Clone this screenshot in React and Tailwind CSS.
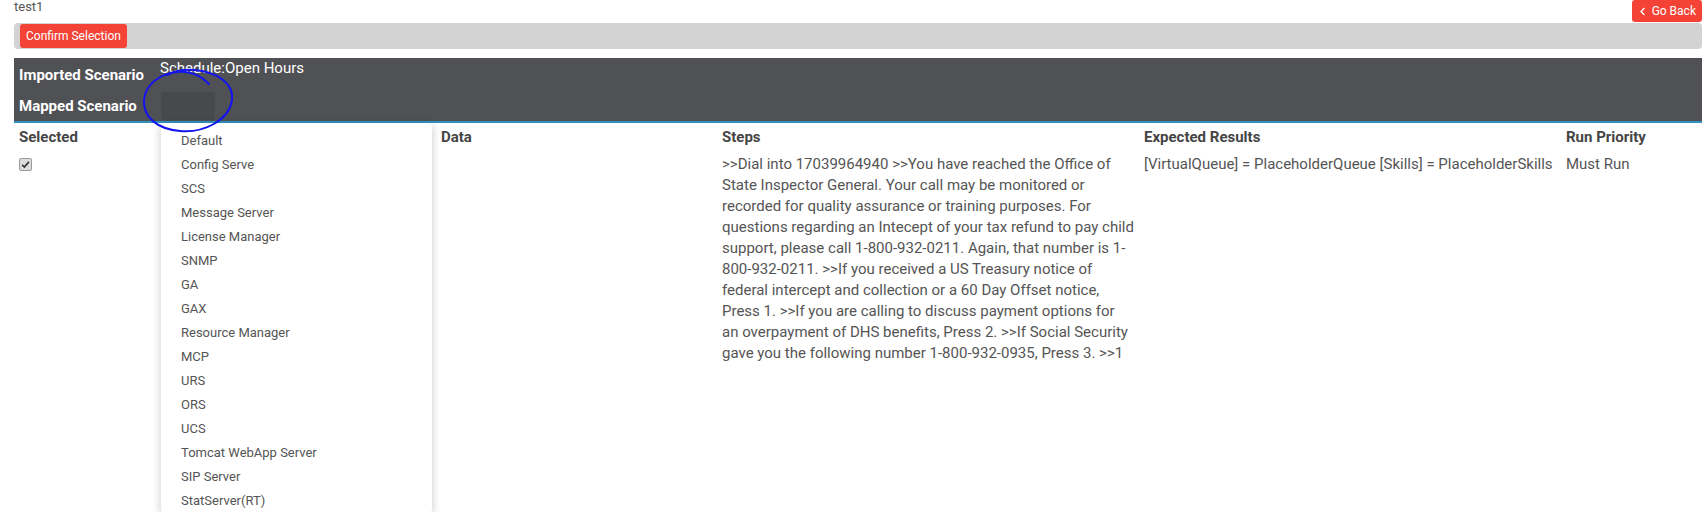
import React from "react";
import { FaChevronLeft } from "react-icons/fa";

const options = [
  "Default",
  "Config Serve",
  "SCS",
  "Message Server",
  "License Manager",
  "SNMP",
  "GA",
  "GAX",
  "Resource Manager",
  "MCP",
  "URS",
  "ORS",
  "UCS",
  "Tomcat WebApp Server",
  "SIP Server",
  "StatServer(RT)",
];

const steps =
  ">>Dial into 17039964940 >>You have reached the Office of State Inspector General. Your call may be monitored or recorded for quality assurance or training purposes. For questions regarding an Intecept of your tax refund to pay child support, please call 1-800-932-0211. Again, that number is 1-800-932-0211. >>If you received a US Treasury notice of federal intercept and collection or a 60 Day Offset notice, Press 1. >>If you are calling to discuss payment options for an overpayment of DHS benefits, Press 2. >>If Social Security gave you the following number 1-800-932-0935, Press 3. >>1";

const App = () => {
  return (
    <div className="relative h-[512px] w-full overflow-hidden bg-white font-['Roboto',sans-serif] text-[#555]">
      <div className="pl-[14px] pr-[5px]">
        {/* Top bar */}
        <div className="flex h-[22px] items-start justify-between">
          <span className="text-[13px] leading-[14px] text-[#555]">test1</span>
          <button className="flex h-[22px] items-center gap-[5px] rounded-[3px] bg-[#f44336] px-[6px] text-[12px] text-white">
            <FaChevronLeft className="text-[9px]" /> Go Back
          </button>
        </div>

        {/* Action bar */}
        <div className="mt-px flex h-[26px] items-center rounded-[4px] bg-[#d3d3d3] px-[6px]">
          <button className="h-[24px] rounded-[3px] bg-[#f44336] px-[6px] text-[12px] text-white">
            Confirm Selection
          </button>
        </div>

        {/* Scenario header */}
        <div className="mt-[9px] border-b-2 border-[#2f93c0] bg-[#505155] text-[15px] text-white">
          <div className="flex h-[34px]">
            <div className="flex w-[141px] items-center pl-[5px] pt-[1px] font-bold">Imported Scenario</div>
            <div className="pl-[5px] leading-[21px]">Schedule:Open Hours</div>
          </div>
          <div className="flex h-[29px]">
            <div className="flex w-[141px] items-center pl-[5px] font-bold">Mapped Scenario</div>
            <div className="pl-[6px]">
              <div className="h-[28px] w-[54px] rounded-[2px] bg-[#48494d]"></div>
            </div>
          </div>
        </div>

        {/* Test case table */}
        <div className="grid grid-cols-[141px_281px_281px_422px_422px_1fr] text-[15px] leading-[21px]">
          <div className="pl-[5px] pt-[4px] pb-[2px] font-bold text-[#454545]">Selected</div>
          <div className="pl-[5px] pt-[4px] pb-[2px]"></div>
          <div className="pl-[5px] pt-[4px] pb-[2px] font-bold text-[#454545]">Data</div>
          <div className="pl-[5px] pt-[4px] pb-[2px] font-bold text-[#454545]">Steps</div>
          <div className="pl-[5px] pt-[4px] pb-[2px] font-bold text-[#454545]">Expected Results</div>
          <div className="pl-[5px] pt-[4px] pb-[2px] font-bold text-[#454545]">Run Priority</div>

          <div className="pl-[5px] pt-[8px]">
            <span className="flex h-[13px] w-[13px] items-center justify-center rounded-[2px] border border-[#9a9a9a] bg-[#dcdcdc]">
              <svg viewBox="0 0 12 12" className="h-[9px] w-[9px]">
                <path d="M1.5 6.5 L4.5 9.5 L10.5 2.5" fill="none" stroke="#333" strokeWidth="2.2" />
              </svg>
            </span>
          </div>
          <div className="pl-[5px] pt-[4px]"></div>
          <div className="pl-[5px] pt-[4px]"></div>
          <div className="pl-[5px] pr-[5px] pt-[4px]">{steps}</div>
          <div className="pl-[5px] pt-[4px]">[VirtualQueue] = PlaceholderQueue [Skills] = PlaceholderSkills</div>
          <div className="pl-[5px] pt-[4px]">Must Run</div>
        </div>
      </div>

      {/* Open select menu */}
      <div className="absolute left-[161px] top-[123px] w-[271px] rounded-[4px] bg-white pt-[6px] shadow-[0_2px_10px_rgba(0,0,0,0.22)]">
        {options.map((opt) => (
          <div key={opt} className="h-[24px] pl-[20px] text-[13px] leading-[24px] text-[#555]">
            {opt}
          </div>
        ))}
      </div>

      {/* Hand-drawn annotation */}
      <svg
        viewBox="0 0 300 160"
        className="pointer-events-none absolute left-0 top-0 z-10 h-[160px] w-[300px]"
      >
        <path
          d="M209 84 C201 76 190 71 178 72 C160 73 145 85 144 100 C143 117 157 129 180 131 C205 133 229 120 232 100 C234 84 218 72 195 70 C185 69 175 71 167 75"
          fill="none"
          stroke="#1414f0"
          strokeWidth="2"
          strokeLinecap="round"
        />
      </svg>
    </div>
  );
};

export default App;
